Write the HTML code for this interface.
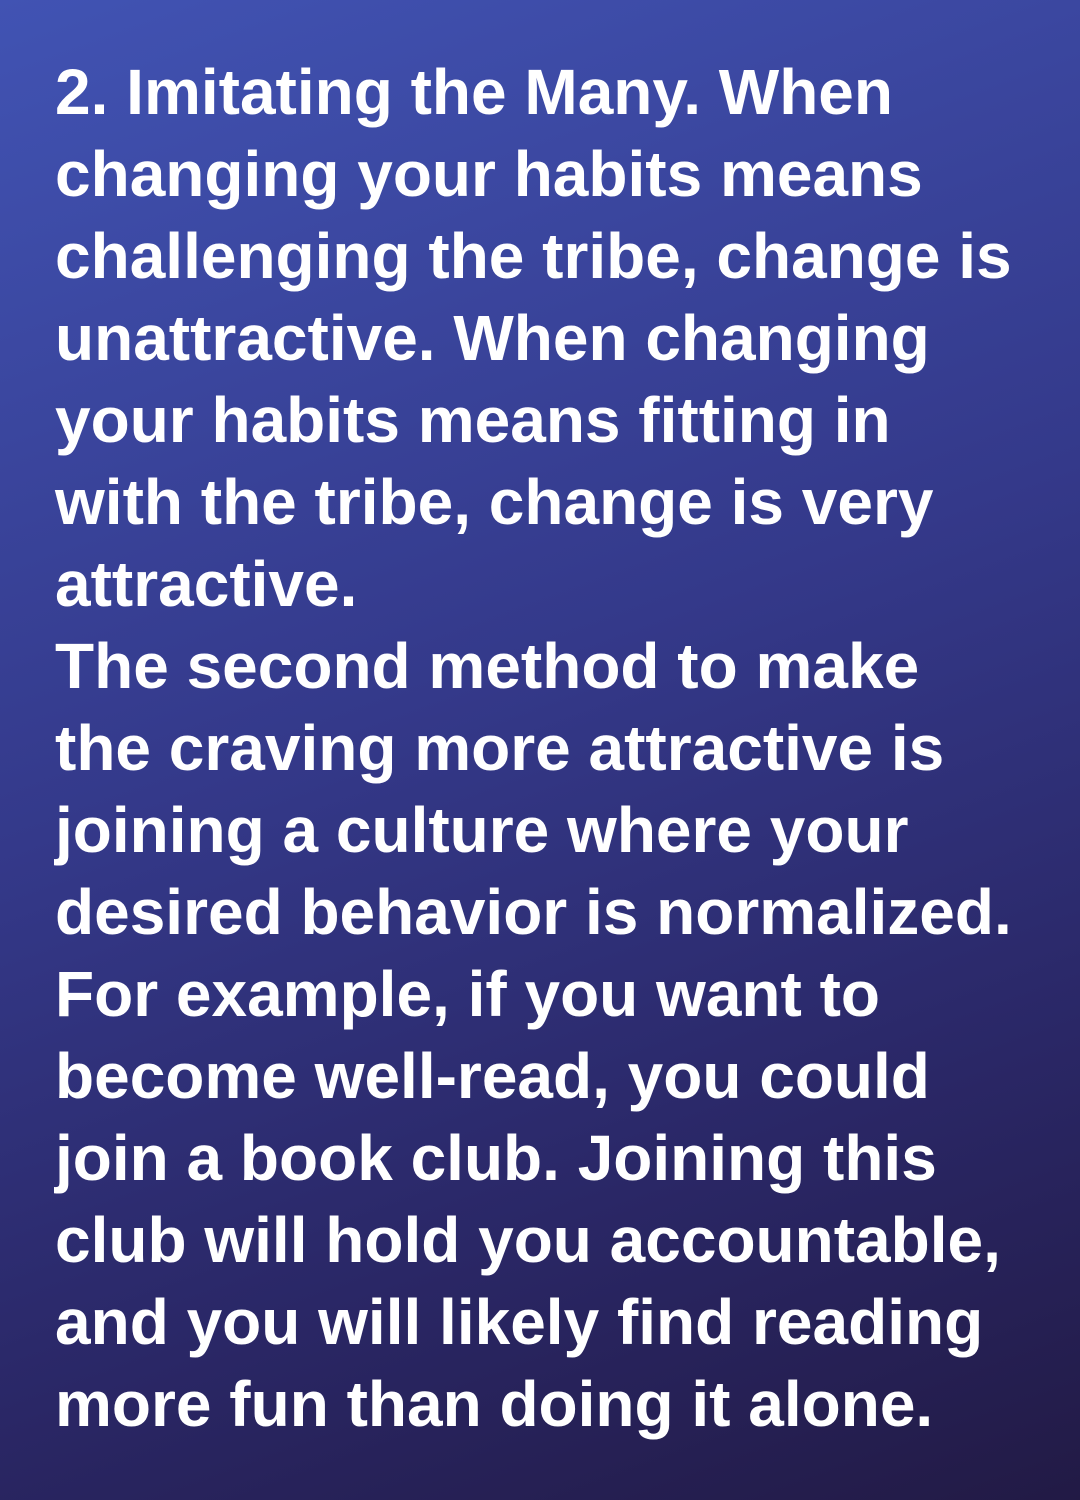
<!DOCTYPE html>
<html><head><meta charset="utf-8"><style>
html,body{margin:0;padding:0}
body{width:1080px;height:1500px;overflow:hidden;background:linear-gradient(160deg,#4153b3 0%,#34398a 45%,#2a2766 75%,#221a45 100%);}
.t{position:absolute;left:55px;top:51px;font-family:"Liberation Sans",sans-serif;font-weight:bold;font-size:64px;line-height:82px;color:#fff;white-space:nowrap}
</style></head><body><div class="t">
<div>2. Imitating the Many. When</div>
<div>changing your habits means</div>
<div>challenging the tribe, change is</div>
<div>unattractive. When changing</div>
<div>your habits means fitting in</div>
<div>with the tribe, change is very</div>
<div>attractive.</div>
<div>The second method to make</div>
<div>the craving more attractive is</div>
<div>joining a culture where your</div>
<div>desired behavior is normalized.</div>
<div>For example, if you want to</div>
<div>become well-read, you could</div>
<div>join a book club. Joining this</div>
<div>club will hold you accountable,</div>
<div>and you will likely find reading</div>
<div>more fun than doing it alone.</div>
</div></body></html>
